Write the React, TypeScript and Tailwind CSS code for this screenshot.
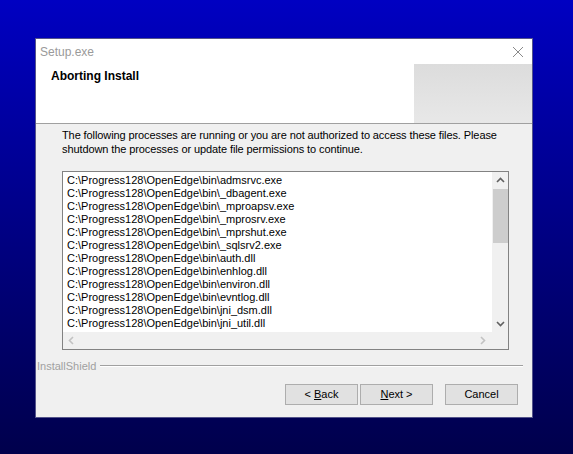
const files = [
  "admsrvc.exe",
  "_dbagent.exe",
  "_mproapsv.exe",
  "_mprosrv.exe",
  "_mprshut.exe",
  "_sqlsrv2.exe",
  "auth.dll",
  "enhlog.dll",
  "environ.dll",
  "evntlog.dll",
  "jni_dsm.dll",
  "jni_util.dll",
];

const Chevron = ({ dir, color }: { dir: "up" | "down" | "left" | "right"; color: string }) => {
  const d = {
    up: "M1 6 L4.5 2.5 L8 6",
    down: "M1 3 L4.5 6.5 L8 3",
    left: "M6 1 L2.5 4.5 L6 8",
    right: "M3 1 L6.5 4.5 L3 8",
  }[dir];
  return (
    <svg width="9" height="9" viewBox="0 0 9 9">
      <path d={d} fill="none" stroke={color} strokeWidth="1.6" />
    </svg>
  );
};

const Button = ({ children }: { children: React.ReactNode }) => (
  <button className="w-[73px] h-[21px] bg-[#e1e1e1] border border-[#adadad] text-[11px] text-black leading-none">
    {children}
  </button>
);

const App = () => {
  return (
    <div
      className="w-[573px] h-[454px] pt-[38px] pl-[35px] bg-gradient-to-b from-[#0000c2] to-[#00004c] overflow-hidden"
      style={{ fontFamily: '"Liberation Sans", Arial, sans-serif' }}
    >
      <div className="w-[498px] h-[380px] border border-[#54548a] bg-[#f0f0f0] flex flex-col">
        {/* title bar */}
        <div className="h-[25px] bg-white flex items-center justify-between pl-[4px] pr-[8px]">
          <span className="text-[12px] text-[#9a9a9a]">Setup.exe</span>
          <svg width="12" height="12" viewBox="0 0 12 12">
            <path d="M1 1 L11 11 M11 1 L1 11" stroke="#8a8a8a" strokeWidth="1" />
          </svg>
        </div>
        {/* header */}
        <div className="h-[60px] bg-white flex border-b border-[#a0a0a0]">
          <div className="flex-1 pl-[15px] pt-[4px] text-[12px] leading-[16px] font-bold text-black">
            Aborting Install
          </div>
          <div className="w-[118px] h-[59px] bg-gradient-to-b from-[#dcdcdc] to-[#e8e8e8]" />
        </div>
        {/* body */}
        <div className="flex-1 flex flex-col">
          <p className="pl-[26px] pr-[20px] pt-[5px] text-[11px] leading-[13.5px] tracking-[-0.1px] text-black">
            The following processes are running or you are not authorized to access these files. Please
            shutdown the processes or update file permissions to continue.
          </p>
          <div className="ml-[26px] mt-[15px] w-[447px] h-[179px] border border-[#828282] bg-white flex flex-col">
            <div className="flex flex-1 min-h-0">
              <div className="flex-1 overflow-hidden pl-[4px] pt-[2px]">
                {files.map((f) => (
                  <div key={f} className="text-[11px] leading-[13px] text-black whitespace-nowrap">
                    C:\Progress128\OpenEdge\bin\{f}
                  </div>
                ))}
              </div>
              <div className="w-[17px] bg-[#f0f0f0] border-l border-white flex flex-col items-center">
                <div className="h-[17px] flex items-center justify-center">
                  <Chevron dir="up" color="#606060" />
                </div>
                <div className="w-[15px] h-[54px] bg-[#cdcdcd]" />
                <div className="flex-1" />
                <div className="h-[17px] flex items-center justify-center">
                  <Chevron dir="down" color="#606060" />
                </div>
              </div>
            </div>
            <div className="h-[17px] flex bg-[#f0f0f0]">
              <div className="flex-1 flex items-center justify-between px-[4px]">
                <Chevron dir="left" color="#c2c2c2" />
                <Chevron dir="right" color="#c2c2c2" />
              </div>
              <div className="w-[17px]" />
            </div>
          </div>
          <div className="mt-[9px] pl-[1px] pr-[9px] flex items-center h-[14px]">
            <span className="text-[11px] leading-[14px] text-[#a0a0a0]">InstallShield</span>
            <div className="flex-1 ml-[4px] h-[2px] border-t border-[#a0a0a0] bg-white" />
          </div>
          <div className="mt-[11px] pr-[14px] flex justify-end">
            <Button>
              &lt; <u>B</u>ack
            </Button>
            <div className="w-[2px]" />
            <Button>
              <u>N</u>ext &gt;
            </Button>
            <div className="w-[12px]" />
            <Button>Cancel</Button>
          </div>
        </div>
      </div>
    </div>
  );
};

export default App;
